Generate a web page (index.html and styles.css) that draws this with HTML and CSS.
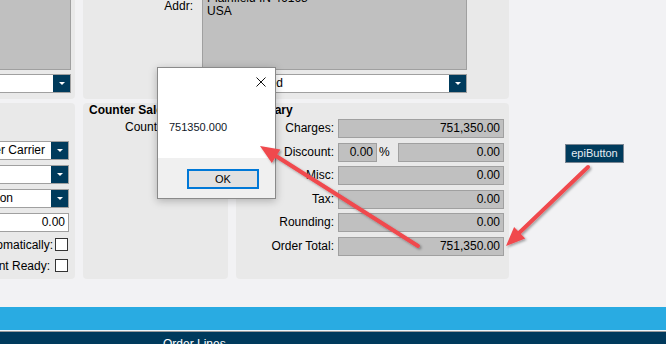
FILE: index.html
```html
<!doctype html>
<html lang="en">
<head>
    <meta charset="UTF-8">
    <meta name="viewport" content="width=device-width, initial-scale=1.0">
    <title>Order Entry</title>
    <link rel="stylesheet" href="styles.css">
</head>
<body>

<div class="panels">
    <div class="panel panel-top-left">
        <div class="memo"></div>
        <div class="combo">
            <span class="combo-text"></span>
            <span class="combo-btn"></span>
        </div>
    </div>

    <div class="panel panel-addr">
        <div class="addr-label">Addr:</div>
        <div class="memo memo-addr">1200 Commerce Dr<br>Plainfield IN 46168<br>USA</div>
        <div class="combo combo-addr">
            <span class="combo-text">Order Entered</span>
            <span class="combo-btn"></span>
        </div>
    </div>

    <div class="panel panel-ship">
        <div class="combo ship-control">
            <span class="combo-text">Customer Carrier</span>
            <span class="combo-btn"></span>
        </div>
        <div class="combo ship-control">
            <span class="combo-text"></span>
            <span class="combo-btn"></span>
        </div>
        <div class="combo ship-control">
            <span class="combo-text">Destination</span>
            <span class="combo-btn"></span>
        </div>
        <div class="field field-white ship-control">0.00</div>
        <label class="check-row check-row-first">Print Automatically:<span class="check"></span></label>
        <label class="check-row check-row-wide">Shipment Ready:<span class="check"></span></label>
    </div>

    <div class="panel panel-counter">
        <div class="panel-title">Counter Sale</div>
        <div class="counter-row">Count Sheet:</div>
    </div>

    <div class="panel panel-summary">
        <div class="panel-title">Summary</div>
        <div class="sum-grid">
            <span class="sum-label">Charges:</span>
            <span class="field">751,350.00</span>

            <span class="sum-label">Discount:</span>
            <span class="sum-split">
                <span class="field field-small">0.00</span>
                <span class="percent">%</span>
                <span class="field field-grow">0.00</span>
            </span>

            <span class="sum-label">Misc:</span>
            <span class="field">0.00</span>

            <span class="sum-label">Tax:</span>
            <span class="field">0.00</span>

            <span class="sum-label">Rounding:</span>
            <span class="field">0.00</span>

            <span class="sum-label">Order Total:</span>
            <span class="field">751,350.00</span>
        </div>
    </div>
</div>

<div class="tabs"></div>
<div class="tabs-nav"><span class="tabs-nav-item">Order Lines</span></div>

<div class="dialog">
    <div class="dialog-head">
        <svg width="10" height="10" viewBox="0 0 10 10">
            <path d="M0.5 0.5 L9.5 9.5 M9.5 0.5 L0.5 9.5" stroke="#111" stroke-width="1" fill="none"/>
        </svg>
    </div>
    <div class="dialog-msg">751350.000</div>
    <div class="dialog-foot">
        <button class="dialog-btn">OK</button>
    </div>
</div>

<div class="tip">epiButton</div>

<svg class="marks" width="666" height="344" viewBox="0 0 666 344">
    <defs>
        <filter id="shade" x="-20%" y="-20%" width="140%" height="140%">
            <feDropShadow dx="1.5" dy="1.5" stdDeviation="1.2" flood-color="#000" flood-opacity="0.35"/>
        </filter>
    </defs>
    <g fill="#f0484d" stroke="#f0484d" filter="url(#shade)">
        <line x1="588" y1="167" x2="519" y2="233" stroke-width="4" stroke-linecap="round"/>
        <polygon points="506,246 525.2,238.6 514.1,227" stroke="none"/>
        <line x1="418" y1="246" x2="276" y2="156" stroke-width="4" stroke-linecap="round"/>
        <polygon points="260,146 280.4,149.4 271.8,163" stroke="none"/>
    </g>
</svg>

</body>
</html>
```

FILE: styles.css
```css
* {
    box-sizing: border-box;
}

body {
    position: relative;
    margin: 0;
    width: 666px;
    height: 344px;
    overflow: hidden;
    background: #f2f2f4;
    font: 12px "Liberation Sans", Arial, sans-serif;
    color: #000;
}

.panels {
    display: grid;
    grid-template-columns: 205px 145px 273px;
    grid-template-rows: 129px 176px;
    gap: 4px 8px;
    margin: -30px 0 0 -130px;
}

.panel {
    background: #e9e9e9;
    border-radius: 4px;
}

.panel-title {
    font-weight: bold;
    line-height: 14px;
}

.memo {
    background: #c0c0c0;
    border: 1px solid #a0a0a0;
}

.combo {
    display: flex;
    height: 19px;
    background: #fff;
    border: 1px solid #a0a0a0;
}

.combo-text {
    flex: 1;
    padding: 0 4px;
    line-height: 17px;
    white-space: nowrap;
    overflow: hidden;
}

.combo-btn {
    display: flex;
    align-items: center;
    justify-content: center;
    width: 17px;
    background: #003b5c;
}

.combo-btn::after {
    content: "";
    border-left: 3px solid transparent;
    border-right: 3px solid transparent;
    border-top: 3px solid #fff;
}

.field {
    height: 19px;
    padding: 0 3px;
    line-height: 17px;
    text-align: right;
    background: #c0c0c0;
    border: 1px solid #a0a0a0;
    white-space: nowrap;
}

.field-white {
    background: #fff;
}

.panel-top-left {
    display: flex;
    flex-direction: column;
    gap: 4px;
    padding: 6px 4px 6px 0;
}

.panel-top-left .memo {
    flex: 1;
}

.panel-addr {
    grid-column: 2 / 4;
    display: grid;
    grid-template-columns: 110px 265px;
    grid-template-rows: 1fr 19px;
    gap: 4px 9px;
    padding: 6px 0;
}

.addr-label {
    padding-top: 23px;
    line-height: 14px;
    text-align: right;
}

.memo-addr {
    padding: 2px 4px;
    line-height: 13px;
}

.combo-addr {
    grid-column: 2;
}

.panel-ship {
    display: flex;
    flex-direction: column;
    align-items: flex-end;
    padding: 38px 6px 0 0;
}

.ship-control {
    width: 121px;
    margin-bottom: 5px;
}

.check-row {
    display: flex;
    align-items: center;
    gap: 2px;
    height: 13px;
    margin-right: 1px;
    line-height: 14px;
    white-space: nowrap;
}

.check-row-first {
    margin-top: 1px;
}

.check-row-wide {
    gap: 5px;
    margin-top: 8px;
}

.check {
    width: 13px;
    height: 13px;
    background: #fff;
    border: 1px solid #333;
}

.panel-counter {
    padding: 0 6px;
    white-space: nowrap;
}

.counter-row {
    margin-top: 3px;
    padding-left: 36px;
    line-height: 14px;
}

.panel-summary {
    padding: 0 5px 0 2px;
}

.sum-grid {
    display: grid;
    grid-template-columns: 96px 166px;
    grid-auto-rows: 19px;
    gap: 4.6px 4px;
    margin-top: 2px;
}

.sum-label {
    line-height: 19px;
    text-align: right;
    white-space: nowrap;
}

.sum-split {
    display: flex;
    align-items: center;
}

.field-small {
    width: 39px;
}

.percent {
    margin: 0 8px 0 2px;
}

.field-grow {
    flex: 1;
}

.tabs {
    height: 24px;
    margin-top: 28px;
    background: #29abe2;
    border-bottom: 1px solid #eef6fa;
}

.tabs-nav {
    height: 20px;
    padding: 5px 0 0 163px;
    background: #003a5c;
    border-top: 1px solid #9a9a9a;
    color: #fff;
    line-height: 14px;
}

/* message box over the form */
.dialog {
    position: absolute;
    left: 157px;
    top: 67px;
    width: 119px;
    height: 132px;
    display: flex;
    flex-direction: column;
    background: #fff;
    border: 1px solid #8a8a8a;
    box-shadow: 0 2px 8px rgba(0, 0, 0, .25);
}

.dialog-head {
    display: flex;
    justify-content: flex-end;
    padding: 9px 9px 0 0;
}

.dialog-head svg {
    display: block;
}

.dialog-msg {
    flex: 1;
    margin-top: 34px;
    padding-left: 11px;
    font-size: 11px;
    line-height: 13px;
    color: #101828;
}

.dialog-foot {
    display: flex;
    justify-content: flex-end;
    height: 40px;
    padding: 11px 16px 0 0;
    background: #f0f0f0;
}

.dialog-btn {
    width: 72px;
    height: 20px;
    padding: 0;
    background: #e1e1e1;
    border: 2px solid #0078d7;
    font: 11px "Liberation Sans", Arial, sans-serif;
    color: #000;
}

.tip {
    position: absolute;
    left: 565px;
    top: 144px;
    width: 59px;
    height: 19px;
    background: #003b5c;
    border: 1px solid #7a8591;
    color: #e6edf3;
    font-size: 11px;
    line-height: 17px;
    text-align: center;
}

.marks {
    position: absolute;
    left: 0;
    top: 0;
    pointer-events: none;
}
```
